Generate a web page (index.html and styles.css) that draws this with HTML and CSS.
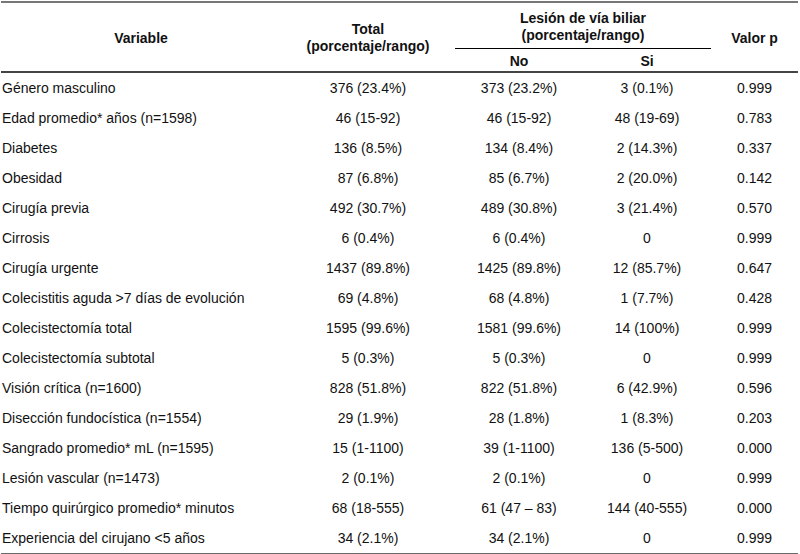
FILE: index.html
```html
<!DOCTYPE html>
<html lang="es">
<head>
<meta charset="utf-8">
<link rel="stylesheet" href="styles.css">
</head>
<body>
<table class="tbl">
  <colgroup>
    <col class="c-var"><col class="c-total"><col class="c-no"><col class="c-si"><col class="c-p">
  </colgroup>
  <thead>
    <tr class="h1">
      <th rowspan="2" class="hv">Variable</th>
      <th rowspan="2">Total<br>(porcentaje/rango)</th>
      <th colspan="2" class="grp"><span class="grp-text">Lesión de vía biliar<br>(porcentaje/rango)</span></th>
      <th rowspan="2">Valor p</th>
    </tr>
    <tr class="h2">
      <th>No</th>
      <th>Si</th>
    </tr>
  </thead>
  <tbody>
    <tr><td>Género masculino</td><td>376 (23.4%)</td><td>373 (23.2%)</td><td>3 (0.1%)</td><td>0.999</td></tr>
    <tr><td>Edad promedio* años (n=1598)</td><td>46 (15-92)</td><td>46 (15-92)</td><td>48 (19-69)</td><td>0.783</td></tr>
    <tr><td>Diabetes</td><td>136 (8.5%)</td><td>134 (8.4%)</td><td>2 (14.3%)</td><td>0.337</td></tr>
    <tr><td>Obesidad</td><td>87 (6.8%)</td><td>85 (6.7%)</td><td>2 (20.0%)</td><td>0.142</td></tr>
    <tr><td>Cirugía previa</td><td>492 (30.7%)</td><td>489 (30.8%)</td><td>3 (21.4%)</td><td>0.570</td></tr>
    <tr><td>Cirrosis</td><td>6 (0.4%)</td><td>6 (0.4%)</td><td>0</td><td>0.999</td></tr>
    <tr><td>Cirugía urgente</td><td>1437 (89.8%)</td><td>1425 (89.8%)</td><td>12 (85.7%)</td><td>0.647</td></tr>
    <tr><td>Colecistitis aguda &gt;7 días de evolución</td><td>69 (4.8%)</td><td>68 (4.8%)</td><td>1 (7.7%)</td><td>0.428</td></tr>
    <tr><td>Colecistectomía total</td><td>1595 (99.6%)</td><td>1581 (99.6%)</td><td>14 (100%)</td><td>0.999</td></tr>
    <tr><td>Colecistectomía subtotal</td><td>5 (0.3%)</td><td>5 (0.3%)</td><td>0</td><td>0.999</td></tr>
    <tr><td>Visión crítica (n=1600)</td><td>828 (51.8%)</td><td>822 (51.8%)</td><td>6 (42.9%)</td><td>0.596</td></tr>
    <tr><td>Disección fundocística (n=1554)</td><td>29 (1.9%)</td><td>28 (1.8%)</td><td>1 (8.3%)</td><td>0.203</td></tr>
    <tr><td>Sangrado promedio* mL (n=1595)</td><td>15 (1-1100)</td><td>39 (1-1100)</td><td>136 (5-500)</td><td>0.000</td></tr>
    <tr><td>Lesión vascular (n=1473)</td><td>2 (0.1%)</td><td>2 (0.1%)</td><td>0</td><td>0.999</td></tr>
    <tr><td>Tiempo quirúrgico promedio* minutos</td><td>68 (18-555)</td><td>61 (47 – 83)</td><td>144 (40-555)</td><td>0.000</td></tr>
    <tr><td>Experiencia del cirujano &lt;5 años</td><td>34 (2.1%)</td><td>34 (2.1%)</td><td>0</td><td>0.999</td></tr>
  </tbody>
</table>
</body>
</html>
```
FILE: styles.css
```css
html, body {
  margin: 0;
  padding: 0;
  background: #ffffff;
}
body {
  padding: 1px 2px 0 1px;
  font-family: "Liberation Sans", Arial, sans-serif;
  font-size: 14px;
  color: #111111;
}
.tbl {
  width: 797px;
  border-collapse: collapse;
  table-layout: fixed;
  border-top: 2px solid #777777;
  border-bottom: 2px solid #6a6a6a;
}
.c-var { width: 280px; }
.c-total { width: 174px; }
.c-no { width: 128px; }
.c-si { width: 128px; }
.c-p { width: 87px; }
th {
  font-weight: bold;
  text-align: center;
  vertical-align: middle;
  line-height: 17px;
  padding: 0;
}
.h1 th { height: 43px; }
.h1 th[rowspan] {
  padding-top: 2px;
  border-bottom: 2px solid #444444;
}
.grp {
  padding: 2px 0 0 0;
  border-bottom: 1px solid #000000;
}
.grp-text { display: inline-block; }
.h2 th {
  height: 20px;
  padding-top: 2px;
  border-bottom: 2px solid #444444;
}
td {
  height: 30px;
  padding: 0;
  text-align: center;
  vertical-align: middle;
  line-height: 16px;
}
td:first-child {
  text-align: left;
  padding-left: 1px;
}
```
